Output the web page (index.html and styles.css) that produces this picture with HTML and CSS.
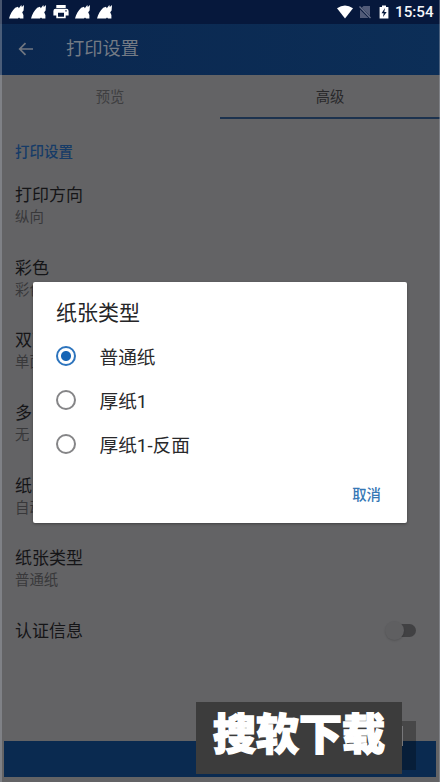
FILE: index.html
```html
<!DOCTYPE html>
<html lang="zh-CN">
<head>
<meta charset="utf-8">
<title>打印设置</title>
<link rel="stylesheet" href="styles.css">
</head>
<body>
<svg class="defs" width="0" height="0"><symbol id="bird" viewBox="0 0 16 16"><path d="M0 14.6C1 10.5 3.4 6.3 6.2 3.8L9 2.8 9.8 4.2 12.3.9 12.8 3 15 1 14.6 6.5 13.2 8.2 14.4 11V14.6H11L10 13.6 9 14.6Z" fill="#fff"/></symbol></svg>
<div class="screen">
  <header class="status">
    <div class="notices">
      <svg width="16" height="16"><use href="#bird"/></svg>
      <svg width="16" height="16"><use href="#bird"/></svg>
      <svg class="printer" width="16" height="16" viewBox="0 0 16 16"><path fill="#fff" fill-rule="evenodd" d="M3.3 1h9.4v3H3.3zM2.7 4.7h10.6Q15.6 4.7 15.6 6.9V11.5H12.7V14.3H3.3V11.5H.4V6.9Q.4 4.7 2.7 4.7ZM5 8.8v3.9h6V8.8zM12.3 6.2v1.4h1.4V6.2z"/></svg>
      <svg width="16" height="16"><use href="#bird"/></svg>
      <svg width="16" height="16"><use href="#bird"/></svg>
    </div>
    <div class="system">
      <svg width="16" height="14" viewBox="0 0 16 14"><path d="M0 3.3Q8-2.2 16 3.3L8 13.5Z" fill="#fff"/></svg>
      <svg class="sim" width="12" height="14" viewBox="0 0 12 14"><path d="M4.5 1H11V11L2.7 2.8ZM1 4.5 9.5 13H1Z" fill="#515b78"/><path d="M.5 1.5 11.5 13" stroke="#6a738b" stroke-width="1.3"/></svg>
      <svg width="10" height="14" viewBox="0 0 10 14"><path d="M3 .5h4V2h2.4v11.5H.6V2H3z" fill="#fff"/><path d="M6 3 2.5 8.2h2.2L4 12l3.7-5H5.3z" fill="#071a3d"/></svg>
      <span class="time">15:54</span>
    </div>
  </header>
  <div class="appbar">
    <svg width="16" height="14" viewBox="0 0 16 14"><path d="M15 7H2M7.5 1.2 1.7 7l5.8 5.8" fill="none" stroke="#717781" stroke-width="1.7"/></svg>
    <h1>打印设置</h1>
  </div>
  <nav class="tabs"><span class="tab">预览</span><span class="tab active">高级</span></nav>
  <main class="settings">
    <h2>打印设置</h2>
    <div class="row"><div class="name">打印方向</div><div class="value">纵向</div></div>
    <div class="row"><div class="name">彩色</div><div class="value">彩色</div></div>
    <div class="row"><div class="name">双面</div><div class="value">单面</div></div>
    <div class="row"><div class="name">多</div><div class="value">无</div></div>
    <div class="row"><div class="name">纸</div><div class="value">自动</div></div>
    <div class="row"><div class="name">纸张类型</div><div class="value">普通纸</div></div>
    <div class="row auth"><div class="name">认证信息</div><div class="switch"><i class="thumb"></i></div></div>
  </main>
  <div class="print"></div>
  <section class="dialog">
    <h3>纸张类型</h3>
    <div class="option"><i class="radio checked"></i><span>普通纸</span></div>
    <div class="option"><i class="radio"></i><span>厚纸1</span></div>
    <div class="option"><i class="radio"></i><span>厚纸1-反面</span></div>
    <div class="actions">取消</div>
  </section>
  <div class="fab"></div>
  <div class="badge">搜软下载</div>
</div>
</body>
</html>
```
FILE: styles.css
```css
* { box-sizing: border-box; }
body {
  margin: 0;
  font-family: Roboto, "Noto Sans CJK SC", sans-serif;
}
h1, h2, h3 { margin: 0; font-weight: 400; }
svg { display: block; flex: none; }
.defs { position: absolute; }
.screen {
  position: relative;
  width: 440px;
  height: 782px;
  overflow: hidden;
  display: flex;
  flex-direction: column;
  background: #636365;
}
.screen::before {
  content: "";
  position: absolute;
  inset: 0;
  border-left: 2px solid rgba(170, 175, 185, .4);
  border-right: 1px solid rgba(170, 175, 185, .4);
}
.status {
  height: 24px;
  flex: none;
  background: #06183c;
  display: flex;
  justify-content: space-between;
  padding: 4px 7px 0 9px;
}
.notices { display: flex; gap: 6px; }
.system { display: flex; gap: 6px; }
.sim { margin: 1px 2px 0 0; }
.system svg { margin-top: 1px; }
.time {
  color: #f4f6fa;
  font-size: 15.2px;
  font-weight: 500;
  line-height: 17px;
  width: 38px;
  white-space: nowrap;
}
.appbar {
  height: 51px;
  flex: none;
  background: linear-gradient(90deg, #0a274f, #0c2e57);
  display: flex;
  align-items: center;
  padding-left: 18px;
  gap: 32px;
}
.appbar svg { margin-top: -2px; }
.appbar h1 {
  font-size: 18.3px;
  line-height: 24px;
  color: #747b85;
  margin-top: -2px;
}
.tabs {
  height: 44px;
  flex: none;
  display: flex;
  font-size: 14.3px;
  line-height: 45px;
  text-align: center;
}
.tab { flex: 1; color: #3e3e40; }
.active { color: #28282a; border-bottom: 2px solid #1c324e; }
.settings { padding: 24px 24px 0 15px; }
.settings h2 {
  font-size: 14.5px;
  font-weight: 500;
  line-height: 20px;
  color: #163b67;
  margin-bottom: 20px;
}
.row { height: 72.7px; }
.name { font-size: 17px; line-height: 24px; color: #151517; }
.value { font-size: 14.4px; line-height: 22px; color: #38383a; }
.auth { display: flex; justify-content: space-between; height: 24px; }
.switch {
  width: 26px;
  height: 13px;
  margin-top: 5px;
  border-radius: 7px;
  background: #414143;
}
.thumb {
  display: block;
  width: 19px;
  height: 19px;
  margin: -3px 0 0 -5px;
  border-radius: 50%;
  background: #5f5f61;
  box-shadow: 0 1px 2px rgba(0, 0, 0, .15);
}
.print {
  height: 36px;
  flex: none;
  margin: auto 4px 5px;
  background: #0a2a50;
}
.dialog {
  position: absolute;
  left: 33px;
  top: 282px;
  width: 374px;
  height: 241px;
  padding: 17px 26px 0 23px;
  border-radius: 2px;
  background: #fff;
  box-shadow: 0 1px 3px rgba(0, 0, 0, .35);
}
.dialog h3 {
  font-size: 21px;
  line-height: 28px;
  color: #252527;
  margin-bottom: 8px;
}
.option {
  height: 44px;
  display: flex;
  align-items: center;
  gap: 23.5px;
  font-size: 18.7px;
  color: #29292b;
}
.option span { margin-top: -4px; }
.radio {
  width: 20px;
  height: 20px;
  margin-top: -2px;
  border: 2px solid #858587;
  border-radius: 50%;
}
.checked {
  border-color: #2d74bd;
  background: radial-gradient(circle, #1765b5 4.5px, #fff 5.5px);
}
.actions {
  margin-top: 18px;
  text-align: right;
  color: #3677b5;
  font-size: 14.4px;
  font-weight: 500;
  line-height: 22px;
}
.fab {
  position: absolute;
  left: 402px;
  top: 721px;
  width: 14px;
  height: 49px;
  background: rgba(0, 0, 0, .28);
}
.fab::before {
  content: "";
  display: block;
  width: 1px;
  height: 20px;
  margin-top: 5px;
  background: #77777a;
}
.badge {
  position: absolute;
  left: 196px;
  top: 702px;
  width: 206px;
  height: 72px;
  background: #3c3c3c;
  color: #fff;
  font-size: 43px;
  font-weight: 900;
  line-height: 67px;
  text-align: center;
  -webkit-text-stroke: 1.5px #fff;
}
```
